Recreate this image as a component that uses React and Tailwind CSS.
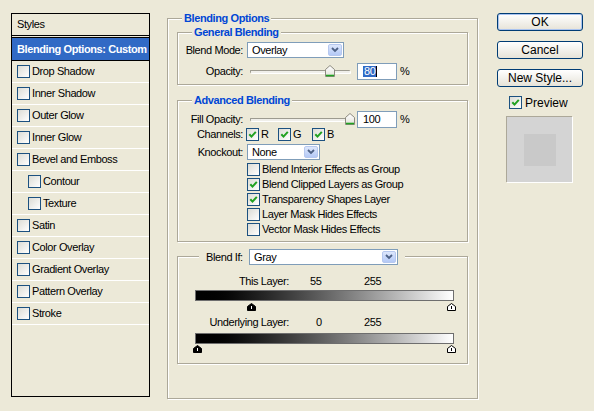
import React from 'react'

const panels = [
  { label: 'Drop Shadow' },
  { label: 'Inner Shadow' },
  { label: 'Outer Glow' },
  { label: 'Inner Glow' },
  { label: 'Bevel and Emboss' },
  { label: 'Contour', sub: true },
  { label: 'Texture', sub: true },
  { label: 'Satin' },
  { label: 'Color Overlay' },
  { label: 'Gradient Overlay' },
  { label: 'Pattern Overlay' },
  { label: 'Stroke' },
]

const options = [
  { label: 'Blend Interior Effects as Group', on: false },
  { label: 'Blend Clipped Layers as Group', on: true },
  { label: 'Transparency Shapes Layer', on: true },
  { label: 'Layer Mask Hides Effects', on: false },
  { label: 'Vector Mask Hides Effects', on: false },
]

function Check({ on }) {
  return (
    <span className="flex h-[13px] w-[13px] shrink-0 items-center justify-center border border-[#1c5180] bg-linear-to-br from-[#dcdcd5] to-white">
      {on && (
        <svg width="9" height="9" viewBox="0 0 9 9">
          <path d="M1.3 4.2 L3.5 6.6 L7.8 1.8" fill="none" stroke="#21a121" strokeWidth="2" />
        </svg>
      )}
    </span>
  )
}

function Select({ value, className = '' }) {
  return (
    <div className={`flex h-[16px] items-center border border-[#7f9db9] bg-white pl-[4px] ${className}`}>
      <span className="flex-1 leading-none">{value}</span>
      <span className="mr-[1px] flex h-[12px] w-[14px] items-center justify-center rounded-[2px] border border-[#b6c8ef] bg-linear-to-b from-[#dde7fc] to-[#b4c9f6]">
        <svg width="8" height="6" viewBox="0 0 8 6">
          <path d="M1 1 L4 4 L7 1" fill="none" stroke="#4d6185" strokeWidth="1.8" />
        </svg>
      </span>
    </div>
  )
}

function Thumb() {
  return (
    <svg width="10" height="12" viewBox="0 0 10 12">
      <defs>
        <linearGradient id="tg" x1="0" y1="0" x2="0" y2="1">
          <stop offset="0" stopColor="#ffffff" />
          <stop offset="1" stopColor="#e3e2da" />
        </linearGradient>
      </defs>
      <path d="M0.5 4.5 L5 0.5 L9.5 4.5 L9.5 11.5 L0.5 11.5 Z" fill="url(#tg)" stroke="#8c8a7f" />
      <path d="M1 10.5 L9 10.5" stroke="#21a121" strokeWidth="1.6" />
    </svg>
  )
}

function Slider({ value }) {
  return (
    <div className="relative h-[13px] w-[112px]">
      <div className="absolute left-[5px] top-[5px] h-[3px] w-[100px] rounded-[1px] border-t border-l border-[#9d9b90] bg-[#f0efea] shadow-[1px_1px_0_#fff]" />
      <div className="absolute top-0" style={{ left: value }}>
        <Thumb />
      </div>
    </div>
  )
}

function Input({ children }) {
  return (
    <div className="flex h-[17px] w-[40px] items-center border border-[#7f9db9] bg-white pl-[5px] leading-none">
      {children}
    </div>
  )
}

function Marker({ dark }) {
  return (
    <svg width="9" height="8" viewBox="0 0 9 8">
      <path
        d="M0.5 7.5 L0.5 3.5 L4.5 0.5 L8.5 3.5 L8.5 7.5 Z"
        fill={dark ? '#000' : '#fff'}
        stroke="#000"
      />
      <path d="M4.5 3 L4.5 6" stroke={dark ? '#fff' : '#000'} strokeWidth="1" />
    </svg>
  )
}

function Group({ title, className = '', titleClass = 'ml-[14px]', children }) {
  return (
    <div
      className={`border border-[#aca899] shadow-[inset_1px_1px_0_#fff,1px_1px_0_#fff] ${className}`}
    >
      <div
        className={`-mt-[7px] w-fit bg-[#ece9d8] px-[2px] font-bold leading-[13px] text-[#0046d5] ${titleClass}`}
      >
        {title}
      </div>
      {children}
    </div>
  )
}

function Button({ children, primary }) {
  return (
    <div
      className={`flex h-[18px] w-[86px] items-center justify-center rounded-[3px] border border-[#003c74] bg-linear-to-b from-white to-[#e6e3d8] text-[12px] tracking-normal ${
        primary ? 'shadow-[inset_0_0_0_1px_#a9c3f0]' : ''
      }`}
    >
      {children}
    </div>
  )
}

export default function App() {
  return (
    <div className="flex h-[411px] w-[594px] items-start bg-[#ece9d8] font-['Liberation_Sans',Arial,sans-serif] text-[11px] tracking-[-0.4px] text-black">
      {/* styles list */}
      <div className="ml-[11px] mt-[13px] h-[384px] w-[139px] border border-black">
        <div className="flex h-[24px] items-center border-b-[3px] border-double border-black pl-[5px]">
          Styles
        </div>
        <div className="flex h-[23px] items-center border-b border-black bg-[#316ac5] pl-[5px] font-bold text-white">
          Blending Options: Custom
        </div>
        {panels.map((p) => (
          <div
            key={p.label}
            className={`flex h-[22px] items-center gap-[1px] border-b border-white ${
              p.sub ? 'pl-[16px]' : 'pl-[5px]'
            }`}
          >
            <Check />
            <span className="ml-[1px]">{p.label}</span>
          </div>
        ))}
      </div>

      {/* blending options */}
      <Group
        title="Blending Options"
        titleClass="ml-[5px]"
        className="ml-[17px] mt-[18px] h-[381px] w-[311px] px-[9px]"
      >
        <Group title="General Blending" className="mt-[7px] h-[53px]">
          <div className="mt-[3px] flex items-center">
            <span className="w-[65px] text-right">Blend Mode:</span>
            <Select value="Overlay" className="ml-[4px] w-[97px]" />
          </div>
          <div className="mt-[4px] flex items-center">
            <span className="w-[65px] text-right">Opacity:</span>
            <div className="ml-[2px]">
              <Slider value={80} />
            </div>
            <Input>
              <span className="bg-[#316ac5] px-[1px] text-white">80</span>
              <span className="h-[11px] w-[1px] bg-black" />
            </Input>
            <span className="ml-[3px]">%</span>
          </div>
        </Group>

        <Group title="Advanced Blending" className="mt-[15px] h-[142px]">
          <div className="mt-[4px] flex items-center">
            <span className="w-[65px] text-right">Fill Opacity:</span>
            <div className="ml-[2px]">
              <Slider value={100} />
            </div>
            <Input>100</Input>
            <span className="ml-[3px]">%</span>
          </div>
          <div className="flex h-[13px] items-center">
            <span className="w-[65px] text-right">Channels:</span>
            <span className="ml-[3px]">
              <Check on />
            </span>
            <span className="ml-[2px] w-[17px]">R</span>
            <Check on />
            <span className="ml-[2px] w-[19px]">G</span>
            <Check on />
            <span className="ml-[2px]">B</span>
          </div>
          <div className="mt-[3px] flex items-center">
            <span className="w-[65px] text-right">Knockout:</span>
            <Select value="None" className="ml-[4px] w-[73px]" />
          </div>
          <div className="mt-[1px] pl-[69px]">
            {options.map((o) => (
              <div key={o.label} className="flex h-[15px] items-center">
                <Check on={o.on} />
                <span className="ml-[2px]">{o.label}</span>
              </div>
            ))}
          </div>
        </Group>

        <div className="mt-[14px] h-[108px] border border-[#aca899] shadow-[inset_1px_1px_0_#fff,1px_1px_0_#fff]">
          <div className="-mt-[8px] ml-[21px] flex h-[16px] w-fit items-center bg-[#ece9d8] px-[7px]">
            <span className="w-[43px]">Blend If:</span>
            <Select value="Gray" className="w-[149px]" />
          </div>
          <div className="mt-[10px] flex h-[13px] items-center">
            <span className="w-[111px] text-right">This Layer:</span>
            <span className="ml-[21px] w-[54px]">55</span>
            <span>255</span>
          </div>
          <div className="ml-[17px] mt-[2px] h-[11px] w-[259px] border border-[#6e6e6e] bg-linear-to-r from-black to-white" />
          <div className="relative mt-[2px] h-[8px]">
            <div className="absolute left-[69px] top-0">
              <Marker dark />
            </div>
            <div className="absolute left-[269px] top-0">
              <Marker />
            </div>
          </div>
          <div className="mt-[5px] flex h-[13px] items-center">
            <span className="w-[111px] text-right">Underlying Layer:</span>
            <span className="ml-[27px] w-[48px]">0</span>
            <span>255</span>
          </div>
          <div className="ml-[17px] mt-[4px] h-[11px] w-[259px] border border-[#6e6e6e] bg-linear-to-r from-black to-white" />
          <div className="relative mt-[1px] h-[8px]">
            <div className="absolute left-[15px] top-0">
              <Marker dark />
            </div>
            <div className="absolute left-[269px] top-0">
              <Marker />
            </div>
          </div>
        </div>
      </Group>

      {/* buttons */}
      <div className="ml-[19px] mt-[13px] flex flex-col">
        <Button primary>OK</Button>
        <div className="mt-[10px]">
          <Button>Cancel</Button>
        </div>
        <div className="mt-[10px]">
          <Button>New Style...</Button>
        </div>
        <div className="ml-[12px] mt-[9px] flex h-[13px] items-center">
          <Check on />
          <span className="ml-[3px] text-[12px] tracking-normal">Preview</span>
        </div>
        <div className="ml-[9px] mt-[7px] flex h-[66px] w-[66px] items-center justify-center border-t border-l border-[#aca899] bg-[#d4d4d4] shadow-[1px_1px_0_#fff]">
          <div className="h-[32px] w-[32px] bg-[#c9c9c9]" />
        </div>
      </div>
    </div>
  )
}
